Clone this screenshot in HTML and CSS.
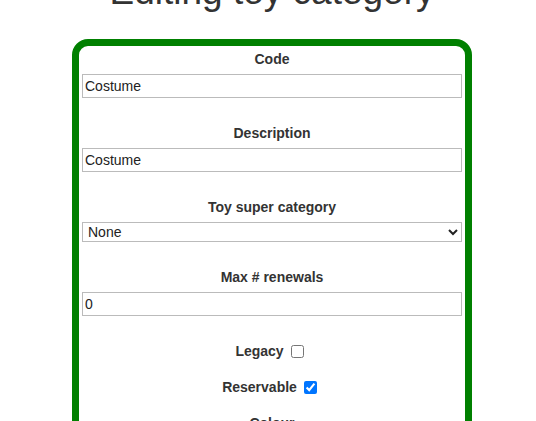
FILE: index.html
```html
<!DOCTYPE html>
<html>
<head>
  <title>Editing toy category</title>
  <link rel="stylesheet" href="styles.css">
</head>
<body>
  <h1>Editing toy category</h1>

  <form class="edit-form">
    <div class="field">
      <label for="code">Code</label>
      <input type="text" id="code" value="Costume">
    </div>

    <div class="field">
      <label for="description">Description</label>
      <input type="text" id="description" value="Costume">
    </div>

    <div class="field">
      <label for="super-category">Toy super category</label>
      <select id="super-category">
        <option>None</option>
      </select>
    </div>

    <div class="field">
      <label for="renewals">Max # renewals</label>
      <input type="text" id="renewals" value="0">
    </div>

    <div class="check-field">
      <label for="legacy">Legacy</label>
      <input type="checkbox" id="legacy">
    </div>

    <div class="check-field">
      <label for="reservable">Reservable</label>
      <input type="checkbox" id="reservable" checked>
    </div>

    <div class="field">
      <label for="colour">Colour</label>
      <input type="text" id="colour" value="">
    </div>
  </form>
</body>
</html>
```

FILE: styles.css
```css
body {
  margin: 0 0 0 8px;
  font-family: "Liberation Sans", Arial, sans-serif;
  color: #333;
  background-color: #fff;
}

h1 {
  font-size: 37px;
  font-weight: normal;
  text-align: center;
  margin: -29px 0 26px 0;
}

.edit-form {
  width: 380px;
  margin: 0 auto;
  padding: 5px 3px 40px 3px;
  border: 7px solid green;
  border-radius: 16px;
  box-sizing: content-box;
}

.field {
  display: flex;
  flex-direction: column;
  align-items: stretch;
  margin-bottom: 27px;
}

.field label,
.check-field label {
  font-size: 14px;
  font-weight: bold;
  text-align: center;
  line-height: 16px;
  margin-bottom: 7px;
}

.field input[type="text"] {
  font-family: "Liberation Sans", Arial, sans-serif;
  font-size: 14px;
  height: 24px;
  padding: 0 2px;
  border: 1px solid #bbb;
  color: #222;
  box-sizing: border-box;
}

.field select {
  font-family: "Liberation Sans", Arial, sans-serif;
  font-size: 14px;
  height: 20px;
  padding: 0 0 0 1px;
  border: 1px solid #bbb;
  border-radius: 0;
  background-color: #fff;
  color: #222;
}

.check-field {
  display: flex;
  justify-content: center;
  align-items: center;
  height: 16px;
  margin: 3px 0 20px 0;
}

.check-field label {
  margin: 0;
}

.check-field input {
  width: 13px;
  height: 13px;
  margin: 0 5px 0 7px;
}

.check-field + .field {
  margin-top: 6px;
}
```
